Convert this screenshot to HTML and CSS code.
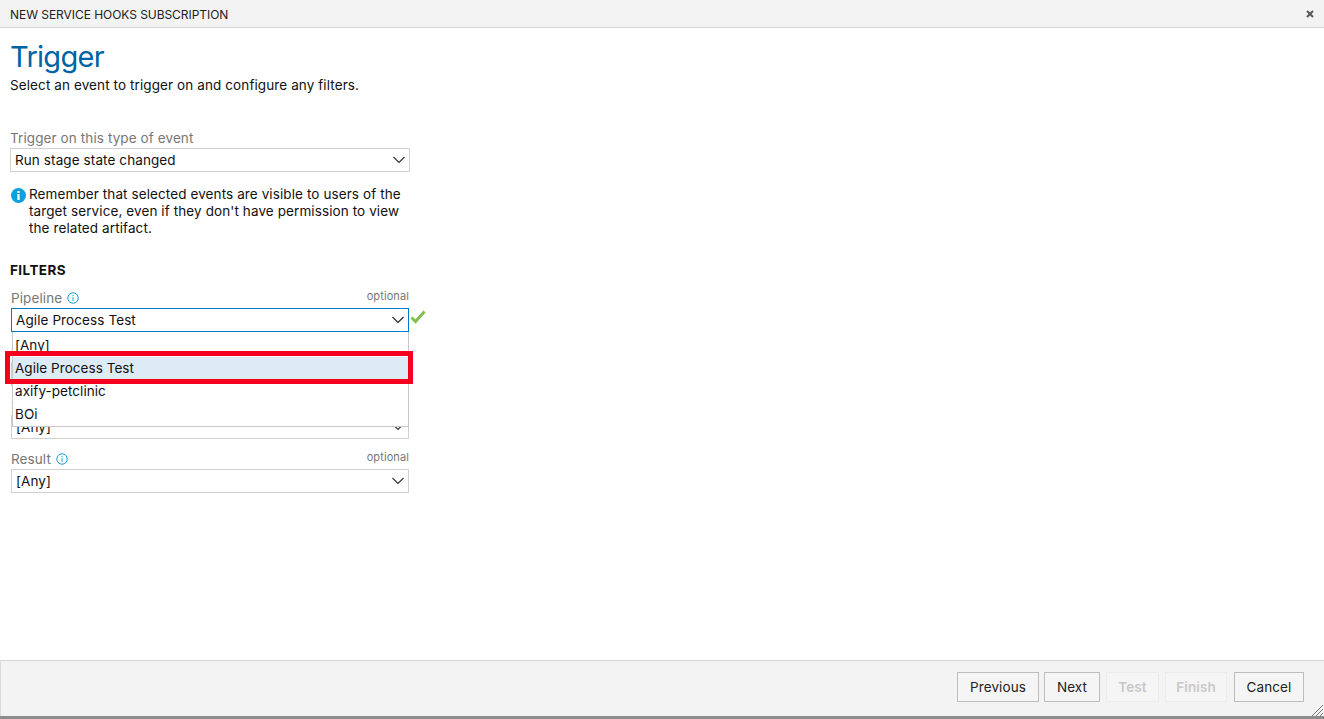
FILE: index.html
```html
<!DOCTYPE html>
<html lang="en">
<head>
<meta charset="utf-8">
<title>New Service Hooks Subscription</title>
<link rel="stylesheet" href="styles.css">
</head>
<body>
<div class="dialog">
  <header class="titlebar">
    <span class="titlebar-text">NEW SERVICE HOOKS SUBSCRIPTION</span>
    <svg class="close" width="8" height="8" viewBox="0 0 8 8"><path d="M1 1l6 6M7 1L1 7"/></svg>
  </header>
  <main class="content">
    <h1 class="title">Trigger</h1>
    <p class="subtitle">Select an event to trigger on and configure any filters.</p>
    <section class="event">
      <label class="event-label">Trigger on this type of event</label>
      <div class="select">
        <span>Run stage state changed</span>
        <svg class="chev" width="14" height="8" viewBox="0 0 14 8"><path d="M1.500 1l5.500 5.500L12.500 1"/></svg>
      </div>
      <div class="notice">
        <svg class="notice-icon" width="15" height="15" viewBox="0 0 15 15"><circle cx="7.5" cy="7.5" r="7.5" fill="#0ea0dc"/><rect x="6.4" y="6" width="2.2" height="6" fill="#fff"/><rect x="6.4" y="3" width="2.2" height="2" fill="#fff"/></svg>
        <p>Remember that selected events are visible to users of the target service, even if they don't have permission to view the related artifact.</p>
      </div>
    </section>
    <h2 class="filters">FILTERS</h2>
    <div class="fields">
      <div class="field">
        <div class="field-head">
          <span class="field-label">Pipeline <svg class="info" width="12" height="12" viewBox="0 0 12 12"><circle cx="6" cy="6" r="5.2"/><path d="M6 5.200v3.600M6 3v1.200"/></svg></span>
          <span class="optional">optional</span>
        </div>
        <div class="select select-active">
          <span>Agile Process Test</span>
          <svg class="chev" width="14" height="8" viewBox="0 0 14 8"><path d="M1.500 1l5.500 5.500L12.500 1"/></svg>
          <svg class="check" width="16" height="14" viewBox="0 0 16 14"><path d="M1.500 7.500l4 4L14.500 1.500"/></svg>
        </div>
        <ul class="menu">
          <li>[Any]</li>
          <li class="menu-selected">Agile Process Test<span class="highlight"></span></li>
          <li>axify-petclinic</li>
          <li>BOi</li>
        </ul>
      </div>
      <div class="field">
        <div class="field-head">
          <span class="field-label">Stage</span>
          <span class="optional">optional</span>
        </div>
        <div class="select"><span>[Any]</span></div>
      </div>
      <div class="field">
        <div class="field-head">
          <span class="field-label">State</span>
          <span class="optional">optional</span>
        </div>
        <div class="select">
          <span>[Any]</span>
          <svg class="chev" width="14" height="8" viewBox="0 0 14 8"><path d="M1.500 1l5.500 5.500L12.500 1"/></svg>
        </div>
      </div>
      <div class="field">
        <div class="field-head">
          <span class="field-label">Result <svg class="info" width="12" height="12" viewBox="0 0 12 12"><circle cx="6" cy="6" r="5.2"/><path d="M6 5.200v3.600M6 3v1.200"/></svg></span>
          <span class="optional">optional</span>
        </div>
        <div class="select">
          <span>[Any]</span>
          <svg class="chev" width="14" height="8" viewBox="0 0 14 8"><path d="M1.500 1l5.500 5.500L12.500 1"/></svg>
        </div>
      </div>
    </div>
  </main>
  <footer class="footer">
    <button class="btn btn-prev">Previous</button>
    <button class="btn btn-next">Next</button>
    <button class="btn btn-test" disabled>Test</button>
    <button class="btn btn-finish" disabled>Finish</button>
    <button class="btn btn-cancel">Cancel</button>
    <svg class="grip" width="12" height="12" viewBox="0 0 12 12"><path d="M1 12L12 1M5 12l7-7M9 12l3-3"/></svg>
  </footer>
  <div class="bottom-edge"></div>
</div>
</body>
</html>
```
FILE: styles.css
```css
* { box-sizing: border-box; }
html, body { margin: 0; height: 100%; }
body {
  font-family: Inter, "Liberation Sans", sans-serif;
  font-size: 13.500px;
  letter-spacing: 0.1px;
  color: #111;
  background: #fff;
  overflow: hidden;
}
.dialog { height: 719px; display: flex; flex-direction: column; }
.titlebar {
  height: 28px;
  flex: none;
  display: flex;
  align-items: center;
  justify-content: space-between;
  padding: 1px 10px 0;
  background: #f3f3f3;
  border-bottom: 1px solid #d4d4d4;
}
.titlebar-text { font-size: 12px; letter-spacing: -0.05px; color: #222; }
.close { stroke: #555; stroke-width: 2; fill: none; }
.content { flex: 1; padding: 10px 10px 0; min-height: 0; }
.title {
  margin: 0;
  font-size: 29px;
  font-weight: 400;
  line-height: 38px;
  color: #0063a3;
  letter-spacing: -0.7px;
}
.subtitle { margin: 0; line-height: 18px; height: 18px; }
.event { width: 400px; margin-top: 35px; }
.event-label { display: block; color: #777; line-height: 18px; height: 18px; margin-bottom: 1px; }
.select {
  position: relative;
  height: 24px;
  display: flex;
  align-items: center;
  justify-content: space-between;
  padding: 0 3px 0 4px;
  border: 1px solid #d0d0d0;
  background: #fff;
}
.chev { stroke: #333; stroke-width: 1.100; fill: none; }
.notice { display: flex; gap: 3px; margin-top: 14px; padding-left: 1px; }
.notice-icon { flex: none; margin-top: 2px; }
.notice p { margin: 0; line-height: 17px; width: 380px; }
.filters { margin: 24px 0 0; font-size: 13.500px; font-weight: 700; letter-spacing: 0.42px; line-height: 18px; color: #111; }
.fields { width: 398px; margin-left: 1px; margin-top: 10px; }
.field { position: relative; height: 53.500px; }
.field-head {
  height: 19px;
  display: flex;
  justify-content: space-between;
  align-items: flex-start;
}
.field-label { color: #777; line-height: 18px; }
.info { vertical-align: -1px; margin-left: 1px; fill: none; stroke: #0ea0dc; stroke-width: 1; }
.optional { font-size: 11px; color: #777; line-height: 14px; }
.select-active { border-color: #0078c8; }
.select-active .chev { stroke: #222; }
.check {
  position: absolute;
  left: 398px;
  top: 1px;
  fill: none;
  stroke: #84bd50;
  stroke-width: 3;
}
.menu {
  position: absolute;
  z-index: 2;
  top: 43px;
  left: 1px;
  width: 397px;
  height: 95px;
  margin: 0;
  padding: 2px 0 0;
  list-style: none;
  letter-spacing: 0.05px;
  background: #fff;
  border: 1px solid #c8c8c8;
  border-top: 0;
}
.menu li { position: relative; height: 23px; line-height: 23px; padding-left: 2px; }
.menu-selected { background: #dcebf5; }
.highlight {
  position: absolute;
  left: -8px;
  right: -5px;
  top: -6px;
  bottom: -4px;
  border: 5px solid #f5001e;
  pointer-events: none;
}
.footer {
  position: relative;
  height: 56px;
  flex: none;
  display: flex;
  justify-content: flex-end;
  align-items: flex-start;
  padding: 11px 20px 0 0;
  background: #f3f3f3;
  border-top: 1px solid #d4d4d4;
  border-left: 1px solid #dcdcdc;
}
.btn {
  height: 30px;
  padding: 0;
  font: inherit;
  letter-spacing: 0.1px;
  color: #222;
  background: #f5f5f5;
  border: 1px solid #bdbdbd;
}
.btn-prev { width: 82px; margin-right: 5px; }
.btn-next { width: 56px; margin-right: 6px; }
.btn-test { width: 53px; margin-right: 6px; }
.btn-finish { width: 62px; margin-right: 7px; }
.btn-cancel { width: 70px; }
.btn:disabled { color: #c8c8c8; border-color: #ececec; font-weight: 600; }
.grip { position: absolute; right: 1px; bottom: 0; stroke: #555; stroke-width: 0.800; fill: none; }
.bottom-edge { height: 3px; flex: none; background: #8c8c8c; }
```
